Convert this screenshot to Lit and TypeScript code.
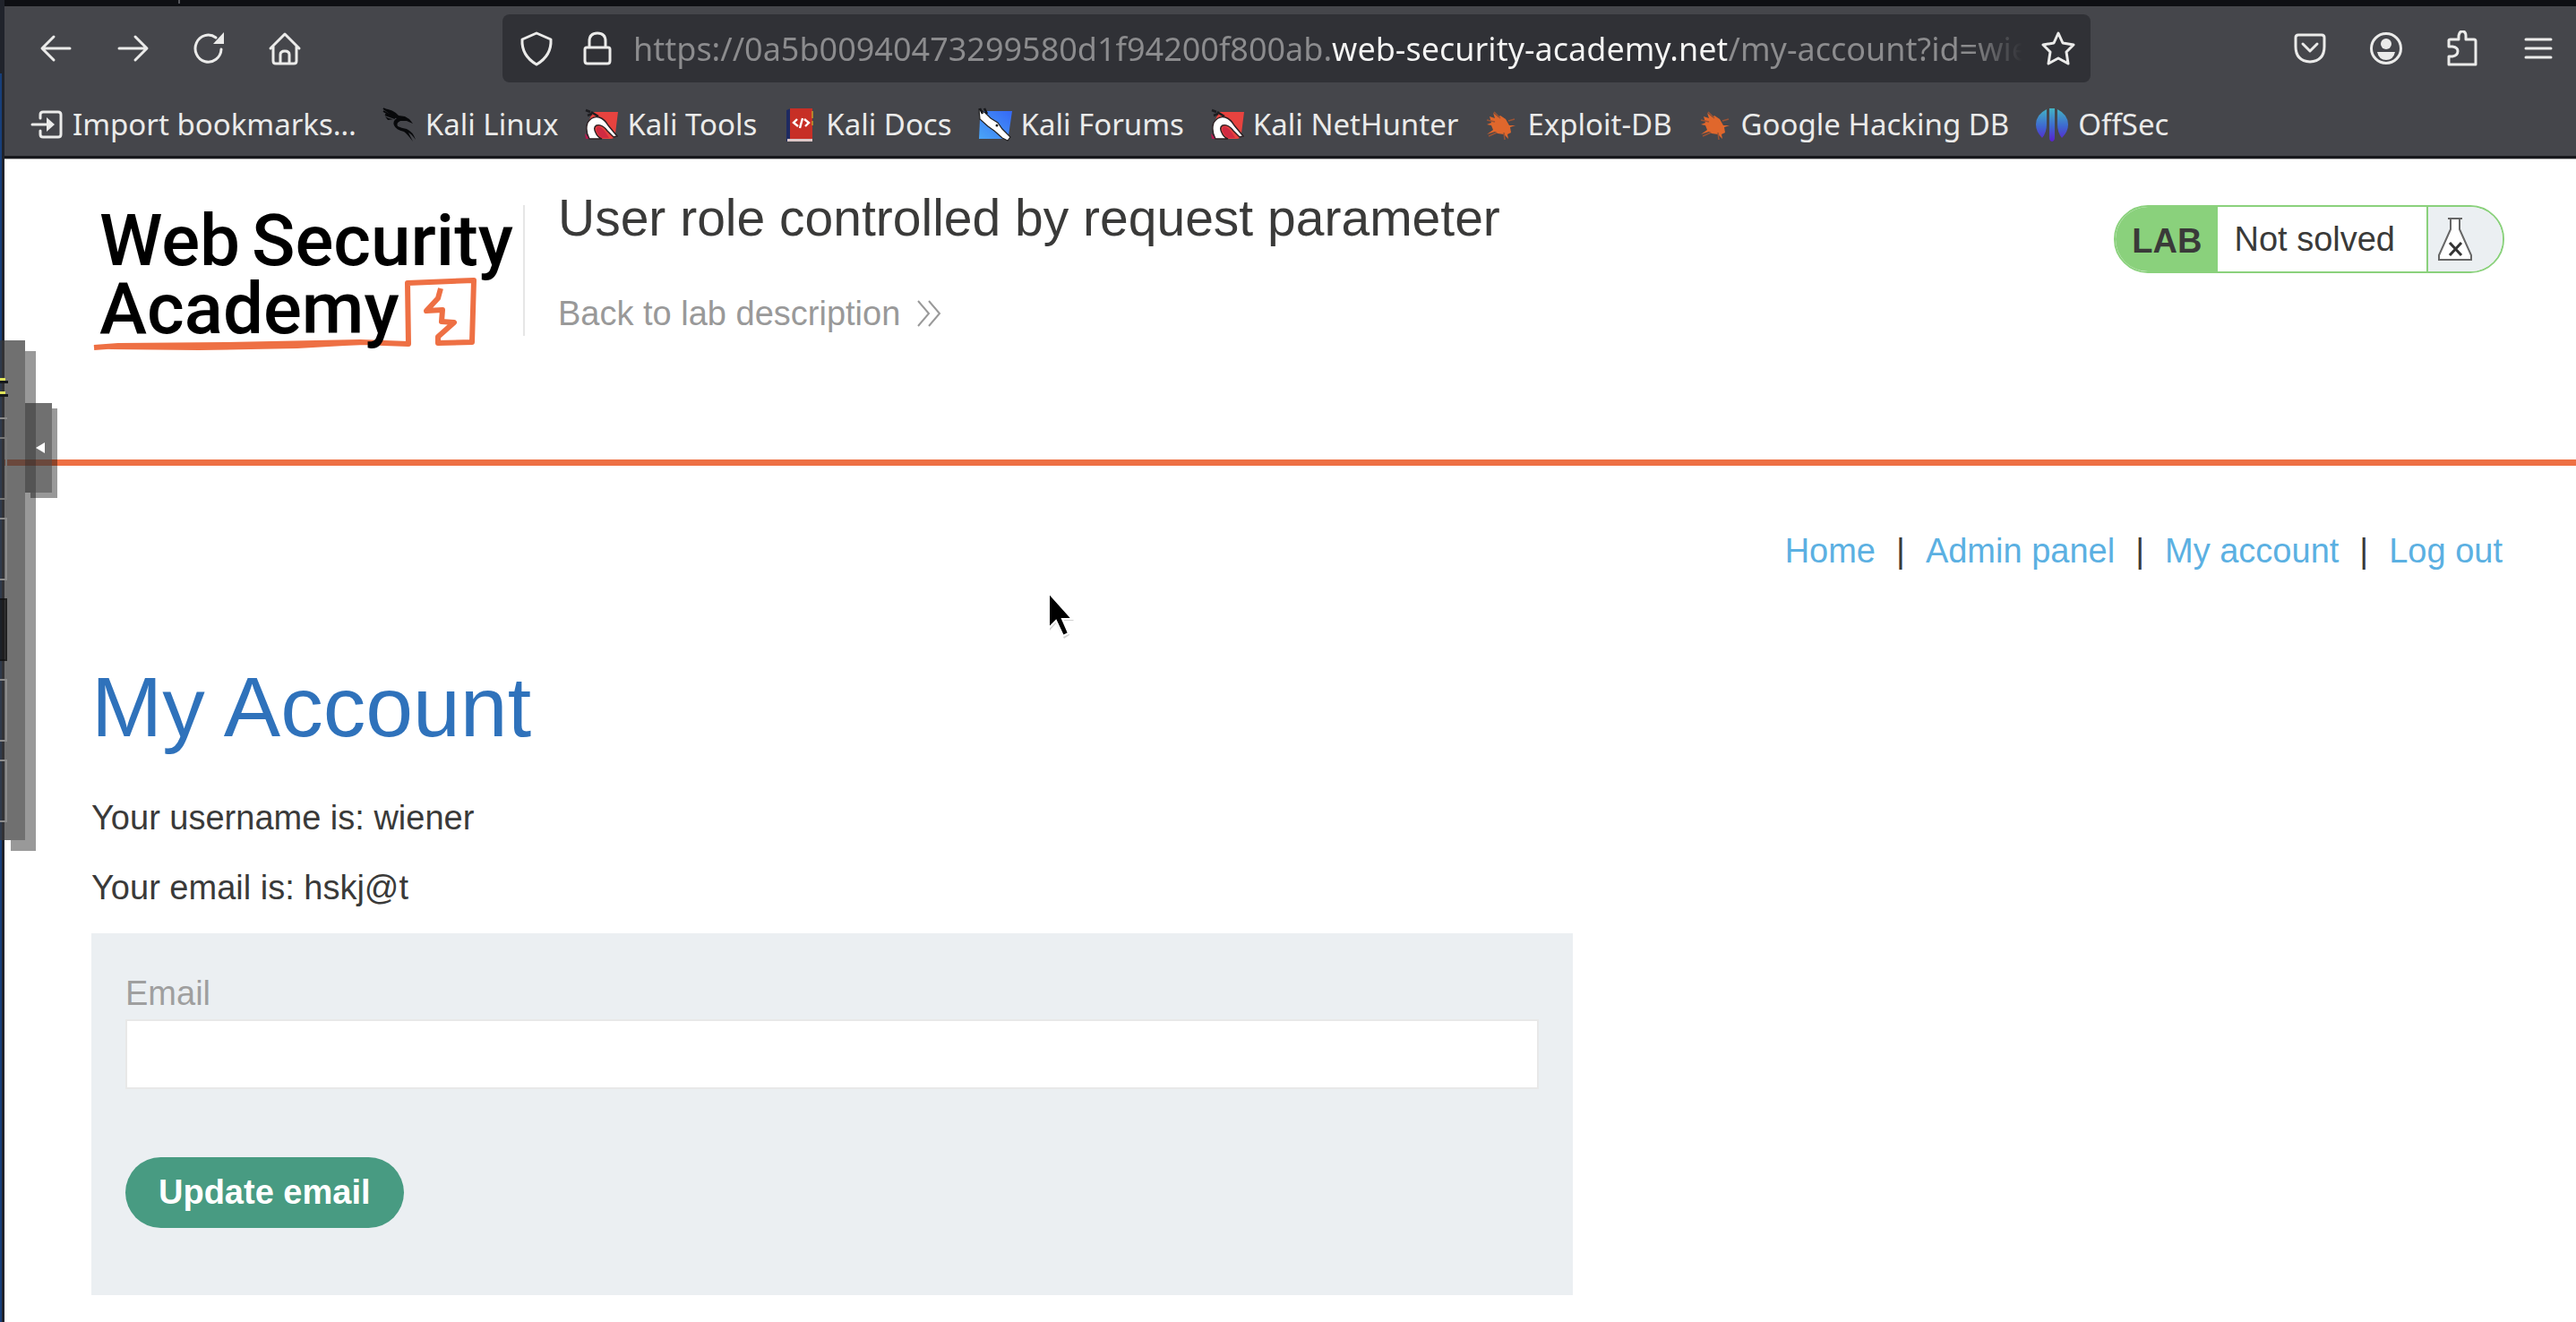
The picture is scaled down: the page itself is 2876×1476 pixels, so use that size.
import { LitElement, html, css, svg } from "lit";
import { customElement, state } from "lit/decorators.js";

const stroke = (d: string, w = 3) =>
  svg`<path d=${d} fill="none" stroke="#ebebea" stroke-width=${w} stroke-linecap="round" stroke-linejoin="round"/>`;

const glyph = (body: unknown) =>
  html`<svg class="glyph" viewBox="0 0 40 40" aria-hidden="true">${body}</svg>`;

const icons = {
  back: glyph(stroke("M35 20H5M17 7L4 20L17 33", 3)),
  forward: glyph(stroke("M5 20H35M23 7L36 20L23 33", 3)),
  reload: glyph(svg`${stroke("M34 21A14.5 15 0 1 1 28 8", 3)}<path d="M37 2V15H25Z" fill="#ebebea"/>`),
  home: glyph(stroke("M4 20L20 4L36 20M7 18V34Q7 37 10 37H30Q33 37 33 34V18M15 37V27Q15 23 20 23Q25 23 25 27V37")),
  shield: glyph(stroke("M20 3L36 10Q37 28 20 38Q3 28 4 10Z")),
  lock: glyph(stroke("M8 19H32Q34 19 34 21V34Q34 37 31 37H9Q6 37 6 34V21Q6 19 8 19ZM11 19V12Q11 3 20 3Q29 3 29 12V19")),
  star: glyph(stroke("M20 3L25 14L37 16L29 24L31 37L20 31L9 37L11 24L3 16L15 14Z")),
  pocket: glyph(stroke("M7 5H33Q36 5 36 8V18Q36 34 20 35Q4 34 4 18V8Q4 5 7 5ZM12 15L20 23L28 15")),
  account: glyph(svg`<circle cx="20" cy="20" r="16.5" fill="none" stroke="#ebebea" stroke-width="3"/>
    <circle cx="20" cy="15" r="6" fill="#ebebea"/><path d="M10 24H30Q28 33 20 33Q12 33 10 24Z" fill="#ebebea"/>`),
  extension: glyph(stroke("M5 38V29H9Q15 28 15 23Q15 19 9 18H5V11Q5 10 7 10H16V6Q17 1 20 1Q24 1 24 6V10H33Q35 10 35 12V38Z")),
  menu: glyph(stroke("M6 10H34M6 20H34M6 30H34")),
};

const fav = (body: unknown) =>
  html`<svg class="fav" viewBox="0 0 38 38" aria-hidden="true">${body}</svg>`;

const importIcon = fav(svg`${stroke("M12 12V8Q12 5 15 5H32Q35 5 35 8V30Q35 33 32 33H15Q12 33 12 30V26M3 19H20", 3)}
  <path d="M19 11L28 19L19 27Z" fill="#ebebea"/>`);

const dragonIcon = fav(svg`<path d="M1 1Q12 2 18 9L25 10L30 13L34 18L27 15L20 15Q15 17 17 21Q21 23 27 24Q34 27 37 36Q32 29 29 28L34 38Q28 30 24 27Q15 25 13 20Q11 15 16 12Q8 11 4 7L11 8Q6 5 1 1ZM3 10Q9 14 14 13L6 14Z" fill="#08090b"/>
  <path d="M1 1L15 11M1 4L14 12M3 8L14 12" stroke="#08090b" stroke-width="2" fill="none"/>`);

const toolsIcon = fav(svg`<path d="M10 5H38L35 29Q34 35 30 35H8L3 20Z" fill="#e8433f"/>
  <path d="M1 29L7 35H2Z" fill="#b5194f"/>
  <path d="M2 3L7 5M4 9L9 7M8 5L16 10" stroke="#1d1d20" stroke-width="2.6"/>
  <path d="M4 17Q9 9 17 11Q23 13 27 20L37 32L33 33L26 26Q20 18 14 20Q10 22 13 28Q15 33 20 35H6Q1 26 4 17Z" fill="#fff" stroke="#2c2023" stroke-width="1.4"/>
  <path d="M15 21Q21 21 28 34H20Q11 27 15 21Z" fill="#d02b42"/>`);

const docsIcon = fav(svg`<path d="M4 3L9 1V35L4 38Z" fill="#1e2a61"/><rect x="8" y="1" width="25" height="34" fill="#c72f26"/>
  <path d="M33 4V12M33 15V20" stroke="#c59b2a" stroke-width="1.5"/><path d="M5 35H33V38H5Z" fill="#dcc8c8"/>
  <path d="M16 13L12 17L17 21M22 12L19 23M24 13L29 17L25 21" stroke="#fff" stroke-width="2.4" fill="none"/>`);

const forumsIcon = fav(svg`<defs><linearGradient id="forum" x1="1" y1="0" x2="0" y2="1"><stop stop-color="#3568f5"/><stop offset="1" stop-color="#4aa5f6"/></linearGradient></defs>
  <path d="M6 4H38L34 31Q33 35 29 35H1L2 14Z" fill="url(#forum)"/>
  <path d="M1 2L8 6L14 12L22 17L27 24L36 33L33 37L27 34L18 26L11 21L2 13Z" fill="#fff" stroke="#222" stroke-width="1.2"/>
  <circle cx="21" cy="20" r="1.5" fill="#222"/>
  <path d="M2 1L5 7M7 1L10 7" stroke="#17181b" stroke-width="2.5"/>`);

const exploitIcon = fav(svg`<path d="M6 10L12 12L10 6L16 11L18 9L24 13L28 20L35 20L29 22L30 28L26 30L27 35L22 30L15 29L12 27L3 30L10 25L8 20L3 19L8 17Z" fill="#e0672c"/>
  <path d="M11 5L18 12M3 14L12 16M5 32L14 28M23 36L22 28M27 15L34 13" stroke="#9a5335" stroke-width="1.5"/>`);

const offsecIcon = fav(svg`<defs><linearGradient id="off" x1="0" y1="0" x2="0" y2="1"><stop stop-color="#43b4c3"/><stop offset=".55" stop-color="#3e67cf"/><stop offset="1" stop-color="#5a1fd0"/></linearGradient></defs>
  <path d="M13 2Q1 8 1 19Q1 27 8 34Q13 28 13 19ZM25 2Q37 8 37 19Q37 27 30 34Q25 28 25 19ZM16 1H22V34Q22 37 19 38Q16 37 16 34Z" fill="url(#off)"/>`);

const bookmarks = [
  { label: "Import bookmarks…", icon: importIcon },
  { label: "Kali Linux", icon: dragonIcon },
  { label: "Kali Tools", icon: toolsIcon },
  { label: "Kali Docs", icon: docsIcon },
  { label: "Kali Forums", icon: forumsIcon },
  { label: "Kali NetHunter", icon: toolsIcon },
  { label: "Exploit-DB", icon: exploitIcon },
  { label: "Google Hacking DB", icon: exploitIcon },
  { label: "OffSec", icon: offsecIcon },
];

@customElement("browser-chrome")
export class BrowserChrome extends LitElement {
  static styles = css`
    :host { display: block; background: #45464b; font: 36px/48px "Noto Sans", sans-serif; color: #ebebea; }
    .tabs { height: 7px; background: #0e0f13; padding-left: 194px; }
    .tab-edge { width: 2px; height: 4px; background: #55565b; }
    .toolbar { display: flex; align-items: center; height: 94px; padding-left: 15px; }
    .tool { width: 85px; height: 76px; border: 0; padding: 0; background: none; display: grid; place-items: center; }
    .glyph { width: 40px; height: 40px; display: block; }
    .address { flex: 1; min-width: 0; margin: 0 202px 0 201px; height: 76px; display: flex; align-items: center;
      background: #303136; border-radius: 8px; padding: 0 16px 0 18px; box-sizing: border-box; }
    .mini { width: 40px; height: 40px; border: 0; padding: 0; background: none; flex: none; }
    .lock { margin: 0 20px 0 28px; }
    .url { flex: 1; min-width: 0; margin-right: 14px; height: 56px; padding: 0; border: 0; outline: 0; font: inherit;
      color: transparent; -webkit-text-fill-color: transparent;
      background: linear-gradient(90deg, #8c8c8e 780px, #f4f4f3 780px, #f4f4f3 1221px, #8c8c8e 1221px) no-repeat;
      background-clip: text; -webkit-background-clip: text;
      -webkit-mask-image: linear-gradient(270deg, transparent 6px, #000 64px);
      mask-image: linear-gradient(270deg, transparent 6px, #000 64px); }
    .bookmarks { display: flex; align-items: center; gap: 29px; height: 70px; padding: 3px 28px 0; font-size: 33px; white-space: nowrap; }
    .bookmark { display: flex; align-items: center; gap: 10px; color: inherit; text-decoration: none; }
    .fav { width: 38px; height: 38px; display: block; flex: none; }
    .edge { height: 3px; background: #17181c; border-bottom: 1px solid #b0b0b0; }
  `;

  render() {
    const tool = (label: string, icon: unknown) =>
      html`<button class="tool" type="button" aria-label=${label}>${icon}</button>`;
    return html`
      <div class="tabs"><div class="tab-edge"></div></div>
      <div class="toolbar">
        ${tool("Back", icons.back)}${tool("Forward", icons.forward)}${tool("Reload", icons.reload)}${tool("Home", icons.home)}
        <div class="address">
          <button class="mini" type="button" aria-label="Tracking protection">${icons.shield}</button>
          <button class="mini lock" type="button" aria-label="Connection secure">${icons.lock}</button>
          <input class="url" type="text" aria-label="Address" spellcheck="false"
            .value=${"https://0a5b00940473299580d1f94200f800ab.web-security-academy.net/my-account?id=wiener"} />
          <button class="mini" type="button" aria-label="Bookmark this page">${icons.star}</button>
        </div>
        ${tool("Pocket", icons.pocket)}${tool("Account", icons.account)}${tool("Extensions", icons.extension)}${tool("Menu", icons.menu)}
      </div>
      <nav class="bookmarks" aria-label="Bookmarks">
        ${bookmarks.map((b) => html`<a class="bookmark" href="#">${b.icon}<span>${b.label}</span></a>`)}
      </nav>
      <div class="edge"></div>
    `;
  }
}

@customElement("academy-header")
export class AcademyHeader extends LitElement {
  static styles = css`
    :host { display: block; border-bottom: 7px solid #ee7044; }
    .bar { display: flex; align-items: flex-start; padding: 42px 80px 0 97px; min-height: 293px; }
    .logo { width: 482px; height: 180px; display: block; flex: none; }
    .logo-text { font: 500 80px Roboto, sans-serif; fill: #000; }
    .titles { flex: 1; border-left: 2px solid #e6e6e6; margin-top: 9px; height: 146px; padding-left: 37px; }
    .title { margin: -20px 0 0; font-size: 57px; line-height: 68px; font-weight: 400; }
    .back { display: inline-flex; align-items: center; gap: 18px; margin-top: 49px; line-height: 48px; color: #999; text-decoration: none; }
    .chevrons { width: 28px; height: 30px; }
    .status { display: flex; margin-top: 9px; height: 72px; line-height: 72px; border: 2px solid #8ad17c; border-radius: 38px; overflow: hidden; }
    .lab { background: #8ad17c; font-weight: 700; padding: 2px 18px 0; }
    .state { padding: 0 35px 0 18px; margin: 0; }
    .flask { background: #ebeff2; border-left: 2px solid #8ad17c; width: 85px; padding-left: 10px; box-sizing: border-box; display: flex; align-items: center; }
    .flask-icon { width: 40px; height: 50px; }
  `;

  render() {
    return html`
      <header class="bar">
        <svg class="logo" viewBox="0 0 482 180" role="img" aria-label="Web Security Academy">
          <path d="M3 168L30 166L150 165L300 162L354 164L353 96L427 93L425 162L387 163V156L405 140L391 139L392 126L374 127L387 113L390 102"
            fill="none" stroke="#ee7044" stroke-width="6" stroke-linejoin="round"/>
          <path d="M2 166L120 164L230 162L300 160L300 165L230 169L120 171L22 170Z" fill="#ee7044"/>
          <text class="logo-text" x="9" y="76">Web</text>
          <text class="logo-text" x="179" y="76">Security</text>
          <text class="logo-text" x="9" y="152">Academy</text>
        </svg>
        <div class="titles">
          <h2 class="title">User role controlled by request parameter</h2>
          <a class="back" href="#">Back to lab description
            <svg class="chevrons" viewBox="0 0 28 30" aria-hidden="true"><path d="M2 1L14 15L2 29M14 1L26 15L14 29" fill="none" stroke="#999" stroke-width="2"/></svg>
          </a>
        </div>
        <div class="status">
          <span class="lab">LAB</span>
          <p class="state">Not solved</p>
          <span class="flask">
            <svg class="flask-icon" viewBox="0 0 40 50" aria-hidden="true">
              <path d="M12 2H28M15 2V14L2 43V48H38V43L25 14V2" fill="#fff" stroke="#666" stroke-width="2"/>
              <path d="M14 29L27 43M27 29L14 43" stroke="#333" stroke-width="3"/>
            </svg>
          </span>
        </div>
      </header>
    `;
  }
}

@customElement("account-page")
export class AccountPage extends LitElement {
  @state() private email = "";

  static styles = css`
    :host { display: block; padding: 70px 82px 30px 97px; }
    .nav { display: flex; justify-content: flex-end; gap: 23px; line-height: 50px; }
    .link { color: #5bb0e2; text-decoration: none; }
    .heading { margin: 93px 0 0; font-size: 95px; line-height: 112px; font-weight: 400; color: #2f72bb; }
    .line { margin: 0; line-height: 50px; padding-top: 28px; }
    .details { padding-top: 15px; }
    .form { margin-top: 26px; box-sizing: border-box; width: 100%; max-width: 1654px; background: #ebeff2; padding: 42px 38px 75px; }
    .label { display: block; color: #9f9f9f; line-height: 50px; }
    .input { display: block; width: 100%; height: 78px; box-sizing: border-box; margin: 4px 0 76px; padding: 0 16px; border: 2px solid #e8e8e8; background: #fff; font: inherit; }
    .submit { display: block; border: 0; border-radius: 40px; background: #489b82; color: #fff; font: inherit; font-weight: 700; line-height: 50px; padding: 14px 37px 15px; }
  `;

  render() {
    const links = ["Home", "Admin panel", "My account", "Log out"];
    return html`
      <nav class="nav">
        ${links.map((l, i) => html`${i ? html`<span>|</span>` : ""}<a class="link" href="#">${l}</a>`)}
      </nav>
      <h1 class="heading">My Account</h1>
      <div class="details">
        <p class="line">Your username is: wiener</p>
        <p class="line">Your email is: hskj@t</p>
      </div>
      <form class="form" @submit=${(e: Event) => e.preventDefault()}>
        <label class="label" for="email">Email</label>
        <input class="input" id="email" type="email" .value=${this.email}
          @input=${(e: InputEvent) => (this.email = (e.target as HTMLInputElement).value)} />
        <button class="submit" type="submit">Update email</button>
      </form>
    `;
  }
}

@customElement("app-root")
export class AppRoot extends LitElement {
  static styles = css`
    :host { display: block; position: relative; min-height: 100vh; box-sizing: border-box; overflow: hidden; color: #3a3a39; padding-left: 5px;
      background: linear-gradient(90deg, #20232b 5px, #fff 5px); font: 38px/50px "Liberation Sans", Arial, sans-serif; }
    .desk { position: absolute; left: 0; top: 82px; bottom: 0; width: 2px; background: #173f7a; }
    .drawer { position: absolute; left: 0; top: 380px; width: 28px; height: 558px; background: rgba(57, 57, 57, 0.72); box-shadow: 12px 12px 0 rgba(0, 0, 0, 0.4); }
    .handle { position: absolute; left: 28px; top: 450px; width: 30px; height: 100px; border: 0; padding: 0 8px 0 12px; background: rgba(57, 57, 57, 0.72);
      box-shadow: 6px 6px 0 rgba(0, 0, 0, 0.4); display: flex; align-items: center; }
    .drawer-art { display: block; width: 28px; height: 558px; }
    .triangle { width: 10px; height: 12px; }
    .pointer { position: absolute; left: 1167px; top: 658px; width: 36px; height: 58px; }
  `;

  render() {
    return html`
      <div class="desk"></div>
      <browser-chrome></browser-chrome>
      <academy-header></academy-header>
      <account-page></account-page>
      <div class="drawer">
        <svg class="drawer-art" viewBox="0 0 28 558" aria-hidden="true">
          <path d="M0 45H9V48H0ZM0 60H9V63H0Z" fill="#15181b"/>
          <path d="M0 42H6V45H0ZM0 57H6V60H0Z" fill="#dfe35a"/>
          <path d="M0 87H8M0 199H7V267H0M0 379H7V447H0M0 469H7V537H0" fill="none" stroke="#8b8b8b" stroke-width="2"/>
          <path d="M0 109H7V177H0" fill="none" stroke="#777" stroke-width="2"/>
          <path d="M0 288H8V358H0Z" fill="#111" fill-opacity=".6"/>
          <path d="M0 289H7V357H0" fill="none" stroke="#0b0b0b" stroke-opacity=".5" stroke-width="2"/>
        </svg>
      </div>
      <button class="handle" type="button" aria-label="Open side panel">
        <svg class="triangle" viewBox="0 0 10 12" aria-hidden="true"><path d="M10 0V12L0 6Z" fill="#fff"/></svg>
      </button>
      <svg class="pointer" viewBox="0 0 36 58" aria-hidden="true">
        <path d="M5 8V46L12 38L21 55L27 51L20 35H32Z" fill="#000" opacity=".18"/>
        <path d="M4 4V43L12 35L20 52L26 49L19 33H30Z" fill="#000" stroke="#fff" stroke-width="2"/>
      </svg>
    `;
  }
}
